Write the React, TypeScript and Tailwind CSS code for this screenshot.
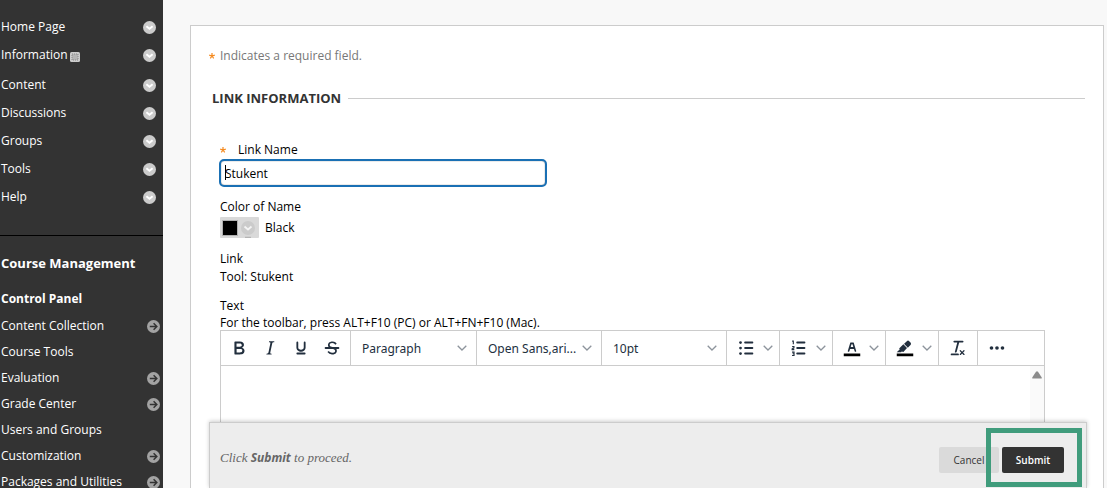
import type { ReactNode } from 'react';

const courseLinks = [
  { name: 'Home Page' },
  { name: 'Information', hidden: true },
  { name: 'Content' },
  { name: 'Discussions' },
  { name: 'Groups' },
  { name: 'Tools' },
  { name: 'Help' },
];

const controlPanel = [
  { name: 'Content Collection', arrow: true },
  { name: 'Course Tools', arrow: false },
  { name: 'Evaluation', arrow: true },
  { name: 'Grade Center', arrow: true },
  { name: 'Users and Groups', arrow: false },
  { name: 'Customization', arrow: true },
  { name: 'Packages and Utilities', arrow: true },
];

const Icon = ({ children }: { children: ReactNode }) => (
  <svg viewBox="0 0 24 24" className="w-[22px] h-[22px] shrink-0" fill="#222f3e" aria-hidden="true">
    {children}
  </svg>
);

const Chevron = () => (
  <svg viewBox="0 0 10 6" className="w-[10px] h-[6px] shrink-0 pointer-events-none" fill="none" stroke="#8d949c" strokeWidth="1.3" aria-hidden="true">
    <path d="M.7.7 5 5 9.3.7" />
  </svg>
);

const MenuDot = () => (
  <svg viewBox="0 0 13 13" className="w-[13px] h-[13px]" aria-hidden="true">
    <circle cx="6.5" cy="6.5" r="6.5" fill="#cbcbcb" />
    <path d="M3.4 5.2 6.5 7.800l3.1-2.600" fill="none" stroke="#fff" strokeWidth="2" />
  </svg>
);

const ArrowDot = () => (
  <svg viewBox="0 0 13 13" className="w-[13px] h-[13px]" aria-hidden="true">
    <circle cx="6.5" cy="6.5" r="6.5" fill="#a3a3a3" />
    <path d="M2.8 6.5h6.6M6.6 3.3l3.2 3.2-3.2 3.2" fill="none" stroke="#333" strokeWidth="1.5" />
  </svg>
);

const Required = () => (
  <svg viewBox="0 0 6 6" className="w-[6px] h-[6px] shrink-0" fill="none" stroke="#f58a1f" strokeWidth="1.2" role="img" aria-label="Required">
    <path d="M3 0v3M3 3 .2 2.100M3 3l2.800-.9M3 3 1.300 5.400M3 3l1.700 2.400" />
  </svg>
);

function ToolButton({ label, children }: { label: string; children: ReactNode }) {
  return (
    <button type="button" aria-label={label} className="flex items-center justify-center w-[31px] h-full">
      {children}
    </button>
  );
}

function SplitButton({ label, children }: { label: string; children: ReactNode }) {
  return (
    <div className="flex w-[53px] pl-[3px] border-r border-[#ccc]">
      <ToolButton label={label}>{children}</ToolButton>
      <button type="button" aria-label={`${label} options`} className="flex items-center pl-[2px]">
        <Chevron />
      </button>
    </div>
  );
}

function ToolSelect({ label, value, className = 'w-[125px]' }: { label: string; value: string; className?: string }) {
  return (
    <div className={`flex items-center pr-[9px] border-r border-[#ccc] ${className}`}>
      <select aria-label={label} className="appearance-none bg-transparent flex-1 min-w-0 h-full pt-[2px] pl-[11px] text-[12px] text-[#222f3e] font-['Noto_Sans',sans-serif]">
        <option>{value}</option>
      </select>
      <Chevron />
    </div>
  );
}

function Sidebar() {
  return (
    <nav className="w-[163px] shrink-0 overflow-hidden bg-[#333] text-white pt-[13px]">
      <ul className="h-[222px]">
        {courseLinks.map((link) => (
          <li key={link.name} className={`flex items-center h-7 pl-px pr-[7px] ${link.hidden ? 'mb-[2px]' : ''}`}>
            <a href="#" className="flex items-center gap-[2px]">
              {link.name}
              {link.hidden && (
                <svg viewBox="0 0 10 10" className="w-[10px] h-[10px] mt-[3px]" aria-label="Hidden from students">
                  <rect width="10" height="10" rx="1.5" fill="#ccc" />
                  <rect x="2" y="2" width="6" height="6" fill="#b5b5b5" stroke="#888" strokeWidth="1" strokeDasharray="1 1" />
                </svg>
              )}
            </a>
            <button type="button" aria-label={`${link.name} menu`} className="ml-auto">
              <MenuDot />
            </button>
          </li>
        ))}
      </ul>
      <h2 className="border-t border-black pt-[17px] pl-px text-[13px] leading-5 font-bold">Course Management</h2>
      <h3 className="mt-4 mb-1 pl-px text-[12px] leading-5 font-bold">Control Panel</h3>
      <ul>
        {controlPanel.map((item) => (
          <li key={item.name} className="flex items-center h-[26px] pl-px pr-[3px]">
            <a href="#" className="whitespace-nowrap">{item.name}</a>
            {item.arrow && (
              <button type="button" aria-label={`Open ${item.name}`} className="ml-auto">
                <ArrowDot />
              </button>
            )}
          </li>
        ))}
      </ul>
    </nav>
  );
}

function Editor() {
  return (
    <div className="border border-[#ccc] mr-[42px]">
      <div className="flex h-[35px] border-b border-[#ccc]" role="toolbar" aria-label="Text editor">
        <div className="flex w-[130px] pl-[2px] border-r border-[#ccc]">
          <ToolButton label="Bold">
            <Icon>
              <path d="M7.8 19c-.3 0-.5 0-.6-.2l-.2-.5V5.7c0-.2 0-.4.2-.5l.6-.2h5c1.5 0 2.7.3 3.5 1 .7.6 1.1 1.4 1.1 2.5a3 3 0 0 1-.6 1.9c-.4.6-1 1-1.6 1.2.4.1.9.3 1.3.6s.8.7 1 1.2c.4.4.5 1 .5 1.6 0 1.3-.4 2.3-1.3 3-.8.7-2.1 1-3.8 1H7.8Zm5-8.3c.6 0 1.2-.1 1.6-.5.4-.3.6-.7.6-1.3 0-1.1-.8-1.7-2.3-1.7H9.3v3.5h3.4Zm.5 6c.7 0 1.3-.1 1.7-.4.4-.4.6-.9.6-1.5s-.2-1-.7-1.4c-.4-.3-1-.4-2-.4H9.4v3.8h4Z" />
            </Icon>
          </ToolButton>
          <ToolButton label="Italic">
            <Icon>
              <path d="m16.7 4.7-.1.9h-.3c-.6 0-1 0-1.4.3-.3.3-.4.6-.5 1.1l-2.1 9.8v.6c0 .5.4.8 1.4.8h.2l-.2.8H8l.2-.8h.2c1.1 0 1.8-.5 2-1.5l2-9.8.1-.5c0-.6-.4-.8-1.4-.8h-.3l.2-.9h5.8Z" />
            </Icon>
          </ToolButton>
          <ToolButton label="Underline">
            <Icon>
              <path d="M16 5c.6 0 1 .4 1 1v5.5a4 4 0 0 1-.4 1.8l-1 1.4a5.3 5.3 0 0 1-5.5 1 5 5 0 0 1-1.6-1c-.5-.4-.8-.9-1.1-1.4a4 4 0 0 1-.4-1.8V6c0-.6.4-1 1-1s1 .4 1 1v5.5c0 .3 0 .6.2 1l.6.7a3.3 3.3 0 0 0 2.2.8 3.4 3.4 0 0 0 2.2-.8c.3-.2.4-.5.6-.8l.2-.9V6c0-.6.4-1 1-1ZM8 17h8c.6 0 1 .4 1 1s-.4 1-1 1H8a1 1 0 0 1 0-2Z" />
            </Icon>
          </ToolButton>
          <ToolButton label="Strikethrough">
            <Icon>
              <path d="M15.6 8.5c-.5-.7-1-1.1-1.3-1.3-.6-.4-1.3-.6-2-.6-2.7 0-2.8 1.7-2.8 2.1 0 1.6 1.8 2 3.2 2.3 4.4.9 4.6 2.8 4.6 3.9 0 1.4-.7 4.1-5 4.1A6.2 6.2 0 0 1 7 16.4l1.5-1.1c.4.6 1.6 2 3.7 2 1.6 0 2.5-.4 3-1.2.4-.8.3-2-.8-2.6-.7-.4-1.6-.7-2.9-1-1-.2-3.9-.8-3.9-3.6C7.6 6 10.3 5 12.4 5c2.9 0 4.2 1.6 4.7 2.4l-1.5 1.1Z" />
              <path d="M5 11h14a1 1 0 0 1 0 2H5a1 1 0 0 1 0-2Z" />
            </Icon>
          </ToolButton>
        </div>
        <ToolSelect label="Block format" value="Paragraph" className="w-[126px]" />
        <ToolSelect label="Font family" value="Open Sans,ari..." />
        <ToolSelect label="Font size" value="10pt" />
        <SplitButton label="Bullet list">
          <Icon>
            <path d="M11 5h8c.6 0 1 .4 1 1s-.4 1-1 1h-8a1 1 0 0 1 0-2Zm0 6h8c.6 0 1 .4 1 1s-.4 1-1 1h-8a1 1 0 0 1 0-2Zm0 6h8c.6 0 1 .4 1 1s-.4 1-1 1h-8a1 1 0 0 1 0-2Z" />
            <circle cx="6" cy="6" r="1.5" />
            <circle cx="6" cy="12" r="1.5" />
            <circle cx="6" cy="18" r="1.5" />
          </Icon>
        </SplitButton>
        <SplitButton label="Numbered list">
          <Icon>
            <path d="M10 17h8c.6 0 1 .4 1 1s-.4 1-1 1h-8a1 1 0 0 1 0-2Zm0-6h8c.6 0 1 .4 1 1s-.4 1-1 1h-8a1 1 0 0 1 0-2Zm0-6h8c.6 0 1 .4 1 1s-.4 1-1 1h-8a1 1 0 1 1 0-2Z" />
            <path d="M4.5 4.5h1.3V8M4.5 10.5h2V12l-2 1v.8h2.4M4.4 16.5h2.2v3.6H4.4M5 18.3h1.5" fill="none" stroke="#222f3e" strokeWidth="1.2" />
          </Icon>
        </SplitButton>
        <SplitButton label="Text color">
          <Icon>
            <path d="M3 18h18v3H3z" fill="#000" />
            <path d="M8.7 16h-.8a.5.5 0 0 1-.5-.6l2.7-9c.1-.3.3-.4.5-.4h2.8c.2 0 .4.1.5.4l2.7 9a.5.5 0 0 1-.5.6h-.8a.5.5 0 0 1-.4-.4l-.7-2.2c0-.3-.3-.4-.5-.4h-3.4c-.2 0-.4.1-.5.4l-.7 2.2c0 .3-.2.4-.4.4Zm2.6-7.6-.6 2a.5.5 0 0 0 .5.6h1.6a.5.5 0 0 0 .5-.6l-.6-2c0-.3-.3-.4-.5-.4h-.4c-.2 0-.4.1-.5.4Z" />
          </Icon>
        </SplitButton>
        <SplitButton label="Highlight color">
          <Icon>
            <path d="M3 18h18v3H3z" fill="#000" />
            <path d="M7.7 16.7H3l3.3-3.3-.7-.8L10.2 8l4 4.1-4 4.2c-.2.2-.6.2-.8 0l-.6-.7-1.1 1.1Zm5-7.5L11 7.4l3-2.9a2 2 0 0 1 2.6 0L18 6c.7.7.7 2 0 2.7l-2.9 2.9-1.8-1.8-.6-.6Z" />
          </Icon>
        </SplitButton>
        <div className="flex w-[39px] pl-[3px] border-r border-[#ccc]">
          <ToolButton label="Clear formatting">
            <Icon>
              <path d="M13.2 6a1 1 0 0 1 0 .2l-2.6 10a1 1 0 0 1-1 .8h-.2a.8.8 0 0 1-.8-1l2.6-10H8a1 1 0 1 1 0-2h9a1 1 0 0 1 0 2h-3.8ZM5 18h7a1 1 0 0 1 0 2H5a1 1 0 0 1 0-2Zm13 1.5L16.5 18 15 19.5a.7.7 0 0 1-1-1l1.5-1.5-1.5-1.5a.7.7 0 0 1 1-1l1.5 1.5 1.5-1.5a.7.7 0 0 1 1 1L17.500 17l1.500 1.500a.7.7 0 0 1-1 1Z" />
            </Icon>
          </ToolButton>
        </div>
        <div className="flex pl-[3px]">
          <ToolButton label="More">
            <Icon>
              <circle cx="6" cy="12" r="2" />
              <circle cx="12" cy="12" r="2" />
              <circle cx="18" cy="12" r="2" />
            </Icon>
          </ToolButton>
        </div>
      </div>
      <div className="flex h-40">
        <textarea aria-labelledby="text-label" className="flex-1 resize-none outline-none p-2" />
        <div className="w-[14px] bg-[#fafafa] pt-[5px]">
          <svg viewBox="0 0 10 8" className="w-[10px] h-[8px] mx-auto" fill="#8b8b8b" aria-hidden="true">
            <path d="M4 .8Q5-.4 6 .8l3.6 5.4Q10.2 7.5 9 7.5H1Q-.2 7.5.4 6.2Z" />
          </svg>
        </div>
      </div>
    </div>
  );
}

export default function App() {
  return (
    <div className="flex h-screen overflow-hidden bg-[#f8f8f8] text-[12px] leading-[18px] text-black font-['Open_Sans',sans-serif]">
      <Sidebar />
      <main className="flex-1 min-w-0 pl-[27px] pr-[3px] pt-[25px]">
        <form className="flex flex-col h-full bg-white border border-b-0 border-[#ccc] pl-[18px] pr-4">
          <div className="flex-1 min-h-0 overflow-hidden">
            <p className="flex items-center gap-[5px] mt-[21px] text-[#777]">
              <Required />
              Indicates a required field.
            </p>
            <div className="flex items-center gap-[7px] mt-6 ml-[3px] mr-[2px]">
              <h1 className="text-[13px] font-bold text-[#333]">LINK INFORMATION</h1>
              <div className="flex-1 border-t border-[#ccc]" />
            </div>

            <div className="mt-[34px] ml-[11px]">
              <label htmlFor="link-name" className="flex items-center gap-3">
                <Required />
                Link Name
              </label>
              <div className="relative w-[328px] -ml-px">
                <input
                  id="link-name"
                  type="text"
                  defaultValue="Stukent"
                  className="block w-full h-7 px-1 bg-white border-2 border-[#1a70b4] rounded-[5px] outline-none shadow-[inset_0_0_1px_#333]"
                />
                <span className="absolute left-[6px] top-[6px] w-px h-[15px] bg-black" />
              </div>

              <p className="mt-[11px]">Color of Name</p>
              <div className="flex items-center gap-[6px] mt-[1px]">
                <button type="button" aria-label="Pick color" className="flex items-center gap-[3px] w-[39px] h-[21px] pl-[2px] rounded-[1px] bg-[#d9d9d9]">
                  <span className="w-4 h-4 bg-black border border-[#b0b0b0]" />
                  <svg viewBox="0 0 14 20" className="w-[14px] h-5" aria-hidden="true">
                    <circle cx="7" cy="10" r="7" fill="#cbcbcb" />
                    <path d="m3.5 8.500 3.5 3 3.5-3" fill="none" stroke="#f4f4f4" strokeWidth="1.800" />
                    <path d="M4 19.300h6" stroke="#aaa" />
                  </svg>
                </button>
                <span>Black</span>
              </div>

              <p className="mt-3">Link</p>
              <p>Tool: Stukent</p>

              <p id="text-label" className="mt-[11px]">Text</p>
              <p className="leading-[15px]">For the toolbar, press ALT+F10 (PC) or ALT+FN+F10 (Mac).</p>
              <Editor />
            </div>
          </div>

          <footer className="flex items-center justify-between shrink-0 h-[66px] pl-[10px] pr-[22px] pt-[8px] bg-[#ededed] border border-b-0 border-[#ccc] shadow-[0_-1px_4px_rgba(0,0,0,0.2)]">
            <p className="pb-1 text-[13px] italic text-[#666] font-['Liberation_Serif',serif]">
              Click <b className="text-[12px] font-['Open_Sans',sans-serif]">Submit</b> to proceed.
            </p>
            <div className="flex gap-[3px] text-[10px]">
              <button type="button" className="w-[60px] h-[26px] rounded-[2px] bg-[#dadada] text-[#333]">Cancel</button>
              <div className="relative">
                <button type="submit" className="w-[62px] h-[26px] rounded-[2px] bg-[#333] text-white font-semibold">Submit</button>
                <div className="absolute -left-4 -right-[18px] -top-[19px] -bottom-[14px] border-[5px] border-[#409c7c] pointer-events-none" />
              </div>
            </div>
          </footer>
        </form>
      </main>
    </div>
  );
}
